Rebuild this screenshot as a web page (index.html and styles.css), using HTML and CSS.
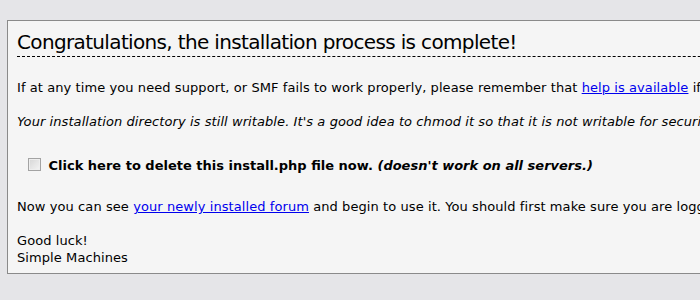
FILE: index.html
```html
<!DOCTYPE html>
<html lang="en">
<head>
    <meta charset="UTF-8">
    <title>SMF Installer</title>
    <link rel="stylesheet" href="styles.css">
</head>
<body>
    <div class="panel">
        <h2>Congratulations, the installation process is complete!</h2>

        <p>If at any time you need support, or SMF fails to work properly, please remember that <a href="#">help is available</a> if you need it.</p>

        <p class="warning">Your installation directory is still writable. It's a good idea to chmod it so that it is not writable for security reasons.</p>

        <div class="delete-row">
            <label><input type="checkbox" class="delete-box"> Click here to delete this install.php file now. <em>(doesn't work on all servers.)</em></label>
        </div>

        <p>Now you can see <a href="#">your newly installed forum</a> and begin to use it. You should first make sure you are logged in, after which you will be able to access the administration center.</p>

        <p class="signoff">Good luck!<br>Simple Machines</p>
    </div>
</body>
</html>
```

FILE: styles.css
```css
/* General */
html, body {
    overflow: hidden;
}
body {
    margin: 0;
    padding: 20px 0 0 7px;
    background-color: #e5e5e8;
    color: #000;
    font-family: "DejaVu Sans", Verdana, sans-serif;
    font-size: 13px;
    line-height: 17px;
    letter-spacing: 0.08px;
}

/* Panel */
.panel {
    width: 1800px;
    background-color: #f5f5f5;
    border: 1px solid #8a8a8a;
    padding: 9px 9px 7px 9px;
}
h2 {
    margin: 0 0 22px 0;
    padding-bottom: 2px;
    font-size: 20px;
    font-weight: normal;
    line-height: 24px;
    letter-spacing: -0.65px;
    border-bottom: 1px dashed #000;
}
p {
    margin: 0 0 17px 0;
}
p.signoff {
    margin-bottom: 0;
}
a {
    color: #0000ee;
}
.warning {
    font-style: italic;
}

/* Delete install.php */
.delete-row {
    margin: 27px 0 24px 0;
    padding-left: 11px;
    font-weight: bold;
    letter-spacing: 0;
}
.delete-box {
    appearance: none;
    margin: 0 3px 0 0;
    width: 13px;
    height: 13px;
    vertical-align: -1px;
    border: 1px solid #a3a3a3;
    background: linear-gradient(135deg, #d6d6d6, #f4f4f4);
    box-shadow: inset 0 0 0 1px #eeeeee;
}
```
